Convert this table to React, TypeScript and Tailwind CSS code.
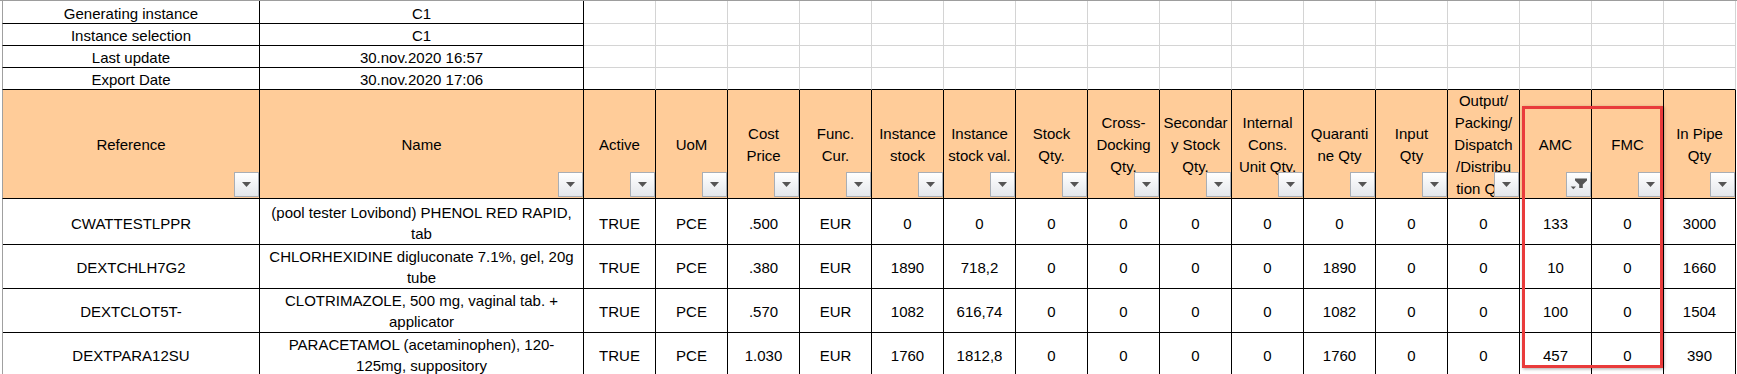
const GRID = "grid grid-cols-[258px_324px_repeat(16,72px)]";

type Header = { lines: string[]; filtered?: boolean };

const headers: Header[] = [
  { lines: ["Reference"] },
  { lines: ["Name"] },
  { lines: ["Active"] },
  { lines: ["UoM"] },
  { lines: ["Cost", "Price"] },
  { lines: ["Func.", "Cur."] },
  { lines: ["Instance", "stock"] },
  { lines: ["Instance", "stock val."] },
  { lines: ["Stock", "Qty."] },
  { lines: ["Cross-", "Docking", "Qty."] },
  { lines: ["Secondar", "y Stock", "Qty."] },
  { lines: ["Internal", "Cons.", "Unit Qty."] },
  { lines: ["Quaranti", "ne Qty"] },
  { lines: ["Input", "Qty"] },
  { lines: ["Output/", "Packing/", "Dispatch", "/Distribu", "tion Qty."] },
  { lines: ["AMC"], filtered: true },
  { lines: ["FMC"] },
  { lines: ["In Pipe", "Qty"] },
];

const info = [
  ["Generating instance", "C1"],
  ["Instance selection", "C1"],
  ["Last update", "30.nov.2020 16:57"],
  ["Export Date", "30.nov.2020 17:06"],
];

const rows = [
  {
    ref: "CWATTESTLPPR",
    name: ["(pool tester Lovibond) PHENOL RED RAPID,", "tab"],
    values: ["TRUE", "PCE", ".500", "EUR", "0", "0", "0", "0", "0", "0", "0", "0", "0", "133", "0", "3000"],
  },
  {
    ref: "DEXTCHLH7G2",
    name: ["CHLORHEXIDINE digluconate 7.1%, gel, 20g", "tube"],
    values: ["TRUE", "PCE", ".380", "EUR", "1890", "718,2", "0", "0", "0", "0", "1890", "0", "0", "10", "0", "1660"],
  },
  {
    ref: "DEXTCLOT5T-",
    name: ["CLOTRIMAZOLE, 500 mg, vaginal tab. +", "applicator"],
    values: ["TRUE", "PCE", ".570", "EUR", "1082", "616,74", "0", "0", "0", "0", "1082", "0", "0", "100", "0", "1504"],
  },
  {
    ref: "DEXTPARA12SU",
    name: ["PARACETAMOL (acetaminophen), 120-", "125mg, suppository"],
    values: ["TRUE", "PCE", "1.030", "EUR", "1760", "1812,8", "0", "0", "0", "0", "1760", "0", "0", "457", "0", "390"],
  },
];

function FilterButton({ filtered }: { filtered?: boolean }) {
  return (
    <div className="absolute bottom-[1px] right-0 flex h-[25px] w-[25px] items-center justify-center border border-[#a9aeb5] bg-linear-to-b from-white to-[#e4e7eb]">
      {filtered ? (
        <svg width="23" height="23" viewBox="0 0 23 23" className="block">
          <path d="M8 5.5H20V7.5L15.8 11.5V15H12.2V11.5L8 7.5Z" fill="#555" />
          <path d="M3.7 13.5H9L6.35 16.3Z" fill="#555" />
        </svg>
      ) : (
        <svg width="9" height="5" viewBox="0 0 9 5" className="block">
          <polygon points="0,0 9,0 4.5,5" fill="#555" />
        </svg>
      )}
    </div>
  );
}

export default function App() {
  return (
    <div className="relative h-[374px] w-[1737px] overflow-hidden bg-white pl-[2px] font-['Liberation_Sans',Arial,sans-serif] text-[15px] text-black">
      <div className="-ml-[2px] h-[1px] bg-[#9d9d9d]" />

      {info.map(([label, value], i) => (
        <div key={label} className={`${GRID} ${i === 0 ? "h-[23px]" : "h-[22px]"}`}>
          <div className="flex items-end justify-center whitespace-nowrap border-b border-l border-r border-b-black border-l-[#a0a0a0] border-r-black leading-[18px]">
            {label}
          </div>
          <div className="flex items-end justify-center whitespace-nowrap border-b border-r border-black leading-[18px]">
            {value}
          </div>
          {Array.from({ length: 16 }).map((_, k) => (
            <div
              key={k}
              className={
                i === 3
                  ? "border-b border-r border-b-black border-r-[#d4d4d4]"
                  : "border-b border-r border-[#d4d4d4]"
              }
            />
          ))}
        </div>
      ))}

      <div className={`${GRID} h-[109px]`}>
        {headers.map((h, i) => (
          <div
            key={i}
            className={`relative flex flex-col items-center justify-center overflow-hidden border-b border-r border-black bg-[#ffcc99] pt-[2px] text-center leading-[22px] ${
              i === 0 ? "border-l border-l-[#a0a0a0]" : ""
            }`}
          >
            {h.lines.map((l) => (
              <div key={l} className="whitespace-nowrap">
                {l}
              </div>
            ))}
            <FilterButton filtered={h.filtered} />
          </div>
        ))}
      </div>

      {rows.map((r) => (
        <div key={r.ref} className={`${GRID} h-[44px]`}>
          <div className="flex items-center justify-center whitespace-nowrap border-b border-l border-r border-b-black border-l-[#a0a0a0] border-r-black pt-[3px] leading-[21px]">
            {r.ref}
          </div>
          <div className="flex flex-col items-center justify-center border-b border-r border-black pt-[3px] leading-[21px]">
            {r.name.map((l) => (
              <div key={l} className="whitespace-nowrap">
                {l}
              </div>
            ))}
          </div>
          {r.values.map((v, k) => (
            <div
              key={k}
              className="flex items-center justify-center whitespace-nowrap border-b border-r border-black pt-[3px] leading-[21px]"
            >
              {v}
            </div>
          ))}
        </div>
      ))}

      <div className="pointer-events-none absolute left-[1522px] top-[106px] h-[262px] w-[141px] border-[3px] border-[#e93b3b] shadow-[1px_1px_3px_rgba(0,0,0,0.35)]" />
    </div>
  );
}
